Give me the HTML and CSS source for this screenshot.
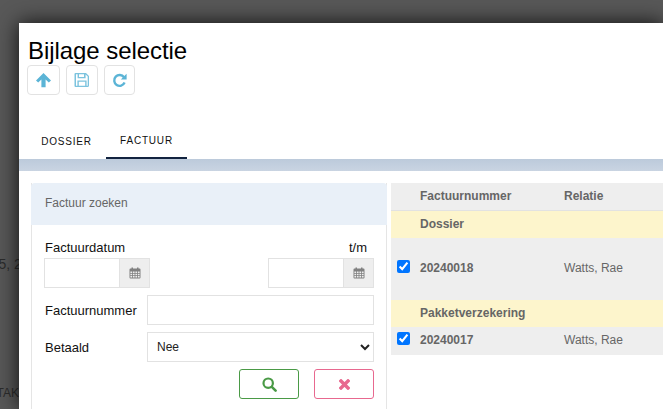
FILE: index.html
```html
<!DOCTYPE html>
<html lang="nl">
<head>
<meta charset="utf-8">
<title>Bijlage selectie</title>
<link rel="stylesheet" href="styles.css">
</head>
<body>
<span class="behind behind-a">5, 2</span>
<span class="behind behind-b">TAK</span>
<main class="modal">
  <header class="head">
    <h1 class="title">Bijlage selectie</h1>
    <div class="tools">
      <button class="tool tool-a" type="button"><svg class="ico" width="17" height="16" viewBox="0 0 17 16"><path d="M8.5 1 16 8.4 13.8 10.6 10.6 7.4V15.2H6.4V7.4L3.2 10.6 1 8.4Z" fill="#5bb4d6"/></svg></button>
      <button class="tool tool-b" type="button"><svg class="ico" width="16" height="16" viewBox="0 0 16 16"><path fill-rule="evenodd" d="M1.5 1H12L15 4V13.5A1.5 1.5 0 0 1 13.5 15H1.5A1 1 0 0 1 .5 14V2A1 1 0 0 1 1.5 1ZM2 2.3V13.7H3.4V8.5H12.6V13.7H13.7V4.6L11.6 2.4V6.2H3.6V2.3ZM5 2.3V5H10V2.3ZM4.8 9.8V13.7H11.2V9.8Z" fill="#7cc3de"/></svg></button>
      <button class="tool tool-c" type="button"><svg class="ico" width="15" height="15" viewBox="0 0 15 15"><path d="M12 4.2A5.4 5.4 0 1 0 12.6 9.6" fill="none" stroke="#5bb4d6" stroke-width="2.4"/><path d="M14.6 .8V6.6H8.8Z" fill="#5bb4d6"/></svg></button>
    </div>
    <nav class="tabs">
      <a class="tab">DOSSIER</a>
      <a class="tab tab-active">FACTUUR</a>
    </nav>
  </header>
  <div class="band"></div>
  <div class="content">
    <section class="panel">
      <div class="panel-head">Factuur zoeken</div>
      <form class="panel-body">
        <div class="date-labels"><label>Factuurdatum</label><label>t/m</label></div>
        <div class="date-row">
          <div class="date"><input class="date-input" type="text"><span class="addon"><svg width="12" height="12" viewBox="0 0 12 12"><path fill-rule="evenodd" d="M1.5 1.5H2.5V.5H4V1.5H8V.5H9.5V1.5H10.5A1 1 0 0 1 11.5 2.5V10.5A1 1 0 0 1 10.5 11.5H1.5A1 1 0 0 1 .5 10.5V2.5A1 1 0 0 1 1.5 1.5ZM1.4 4.4V5.9H3.1V4.4ZM3.9 4.4V5.9H5.6V4.4ZM6.4 4.4V5.9H8.1V4.4ZM8.9 4.4V5.9H10.6V4.4ZM1.4 6.7V8.2H3.1V6.7ZM3.9 6.7V8.2H5.6V6.7ZM6.4 6.7V8.2H8.1V6.7ZM8.9 6.7V8.2H10.6V6.7ZM1.4 9V10.6H3.1V9ZM3.9 9V10.6H5.6V9ZM6.4 9V10.6H8.1V9ZM8.9 9V10.6H10.6V9Z" fill="#808080"/></svg></span></div>
          <div class="date"><input class="date-input" type="text"><span class="addon"><svg width="12" height="12" viewBox="0 0 12 12"><path fill-rule="evenodd" d="M1.5 1.5H2.5V.5H4V1.5H8V.5H9.5V1.5H10.5A1 1 0 0 1 11.5 2.5V10.5A1 1 0 0 1 10.5 11.5H1.5A1 1 0 0 1 .5 10.5V2.5A1 1 0 0 1 1.5 1.5ZM1.4 4.4V5.9H3.1V4.4ZM3.9 4.4V5.9H5.6V4.4ZM6.4 4.4V5.9H8.1V4.4ZM8.9 4.4V5.9H10.6V4.4ZM1.4 6.7V8.2H3.1V6.7ZM3.9 6.7V8.2H5.6V6.7ZM6.4 6.7V8.2H8.1V6.7ZM8.9 6.7V8.2H10.6V6.7ZM1.4 9V10.6H3.1V9ZM3.9 9V10.6H5.6V9ZM6.4 9V10.6H8.1V9ZM8.9 9V10.6H10.6V9Z" fill="#808080"/></svg></span></div>
        </div>
        <div class="field"><label class="field-label">Factuurnummer</label><input class="control" type="text"></div>
        <div class="field"><label class="field-label">Betaald</label><select class="control select"><option>Nee</option></select></div>
        <div class="actions">
          <button class="act act-search" type="button"><svg width="15" height="15" viewBox="0 0 15 15"><circle cx="6.2" cy="6.2" r="4.7" fill="none" stroke="#4a9a46" stroke-width="2.2"/><path d="M9.8 9.8 13.6 13.6" stroke="#4a9a46" stroke-width="2.6" stroke-linecap="round"/></svg></button>
          <button class="act act-clear" type="button"><svg width="11" height="11" viewBox="0 0 11 11"><path d="M2 2 9 9M9 2 2 9" stroke="#e8688f" stroke-width="3.4" stroke-linecap="square"/></svg></button>
        </div>
      </form>
    </section>
    <section class="results">
      <div class="row row-head"><span class="cell-check"></span><span class="cell-num">Factuurnummer</span><span>Relatie</span></div>
      <div class="row row-group"><span class="cell-check"></span><span class="cell-num">Dossier</span></div>
      <div class="row row-item row-tall"><span class="cell-check"><input class="check" type="checkbox" checked></span><span class="cell-num">20240018</span><span class="rel">Watts, Rae</span></div>
      <div class="row row-group"><span class="cell-check"></span><span class="cell-num">Pakketverzekering</span></div>
      <div class="row row-item"><span class="cell-check"><input class="check" type="checkbox" checked></span><span class="cell-num">20240017</span><span class="rel">Watts, Rae</span></div>
    </section>
  </div>
</main>
</body>
</html>
```
FILE: styles.css
```css
* { box-sizing: border-box; }
html, body { height: 100%; }
body {
  margin: 0;
  height: 409px;
  overflow: hidden;
  background: #585858;
  font-family: "Liberation Sans", Arial, sans-serif;
  padding: 23px 0 0 19px;
  position: relative;
}
.behind { position: absolute; color: #2c2c2c; }
.behind-a { top: 256px; left: -1.5px; font-size: 14px; }
.behind-b { top: 386px; left: -3.5px; font-size: 12px; }
.modal {
  position: relative;
  height: 386px;
  background: #fff;
  box-shadow: 0 0 20px rgba(0,0,0,.85);
  overflow: hidden;
}
.head { padding: 14px 0 0 8px; height: 136px; }
.title { margin: 0 0 0 1px; font-size: 24px; font-weight: 400; line-height: 28px; letter-spacing: -.06px; color: #000; }
.tools { display: flex; margin-top: 0; }
.tool {
  height: 30px;
  padding: 0;
  display: flex;
  align-items: center;
  justify-content: center;
  background: #fff;
  border: 1px solid #e2e2e2;
  border-radius: 4px;
}
.tool-a { width: 33px; }
.tool-b { width: 32px; margin-left: 6px; }
.tool-c { width: 31px; margin-left: 6px; }
.tabs { display: flex; margin-top: 34px; height: 30px; }
.tab {
  display: flex;
  align-items: center;
  justify-content: center;
  font-size: 10px;
  letter-spacing: .8px;
  color: #111;
  height: 30px;
  padding-bottom: 6px;
}
.tab:first-child { width: 79px; }
.tab-active { width: 81px; border-bottom: 2px solid #12233f; }
.band { height: 12px; background: linear-gradient(#bccadb, #c9d4e2); }
.content { display: flex; padding: 12px 0 0 12px; }
.panel {
  width: 356px;
  height: 240px;
  flex: none;
  border: solid #e5e5e5;
  border-width: 0 1px;
}
.panel-head {
  height: 42px;
  margin: 0 -1px;
  padding: 0 0 2px 14px;
  display: flex;
  align-items: center;
  background: #e9f0f8;
  border-radius: 4px 4px 0 0;
  font-size: 12px;
  color: #666;
}
.panel-body { padding: 15px 12px 0 12px; font-size: 13px; color: #111; }
.date-labels { display: flex; justify-content: space-between; padding: 0 7px 0 1px; height: 18px; line-height: 16px; }
.date-row { display: flex; justify-content: space-between; }
.date { display: flex; width: 106px; height: 30px; border: 1px solid #e2e2e2; }
.date-input { flex: 1; min-width: 0; border: 0; padding: 0; background: #fff; }
.addon {
  width: 30px;
  display: flex;
  align-items: center;
  justify-content: center;
  background: #eee;
  border-left: 1px solid #e2e2e2;
}
.field { display: flex; align-items: center; margin-top: 7px; height: 30px; }
.field-label { width: 103px; padding-left: 1px; flex: none; }
.control {
  flex: 1;
  height: 30px;
  min-width: 0;
  border: 1px solid #e2e2e2;
  background: #fff;
  font: 12px "Liberation Sans", Arial, sans-serif;
  color: #222;
}
.select { padding-left: 5px; border-radius: 0; }
.actions { display: flex; justify-content: flex-end; gap: 15px; margin-top: 7px; }
.act {
  width: 60px;
  height: 30px;
  padding: 0;
  background: #fff;
  border-radius: 3px;
  display: flex;
  align-items: center;
  justify-content: center;
}
.act-search { border: 1px solid #4a9a46; }
.act-clear { border: 1px solid #e8688f; }
.results { flex: 1; margin-left: 4px; font-size: 12px; color: #666; font-weight: 700; }
.row { display: flex; align-items: center; height: 27px; padding-bottom: 2px; background: #eee; }
.row-head { height: 28px; border-bottom: 1px solid #e2e2e2; }
.row-group { background: #fdf5cc; }
.row-tall { height: 62px; }
.row-item:last-child { height: 28px; }
.cell-check { width: 29px; display: flex; align-items: center; padding-left: 6px; flex: none; }
.cell-num { width: 144px; flex: none; }
.rel { font-weight: 400; }
.check { margin: 0 0 4px; width: 13px; height: 13px; }
```
